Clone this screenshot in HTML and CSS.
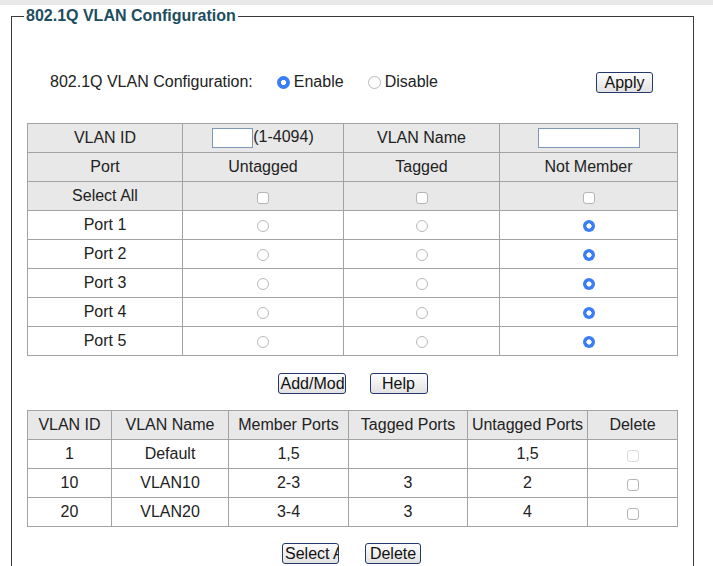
FILE: index.html
```html
<!DOCTYPE html>
<html>
<head>
<meta charset="utf-8">
<link rel="stylesheet" href="styles.css">
</head>
<body>
<div class="topbar"></div>
<fieldset class="panel">
  <legend class="panel-title">802.1Q VLAN Configuration</legend>
  <div class="cfg-row">
    <span class="cfg-label">802.1Q VLAN Configuration:</span>
    <label class="opt opt-first"><input type="radio" name="en" class="radio" checked>Enable</label>
    <label class="opt"><input type="radio" name="en" class="radio">Disable</label>
    <button class="btn btn-apply">Apply</button>
  </div>

  <table class="grid port-table">
    <colgroup><col class="c155"><col class="c161"><col class="c156"><col class="c178"></colgroup>
    <tr class="head">
      <td>VLAN ID</td>
      <td><input class="txt txt-id" type="text">(1-4094)</td>
      <td>VLAN Name</td>
      <td><input class="txt txt-name" type="text"></td>
    </tr>
    <tr class="head"><td>Port</td><td>Untagged</td><td>Tagged</td><td>Not Member</td></tr>
    <tr class="head">
      <td>Select All</td>
      <td><input type="checkbox" class="chk"></td>
      <td><input type="checkbox" class="chk"></td>
      <td><input type="checkbox" class="chk"></td>
    </tr>
    <tr><td>Port 1</td><td><input type="radio" name="p1" class="radio radio-sm"></td><td><input type="radio" name="p1" class="radio radio-sm"></td><td><input type="radio" name="p1" class="radio radio-sm" checked></td></tr>
    <tr><td>Port 2</td><td><input type="radio" name="p2" class="radio radio-sm"></td><td><input type="radio" name="p2" class="radio radio-sm"></td><td><input type="radio" name="p2" class="radio radio-sm" checked></td></tr>
    <tr><td>Port 3</td><td><input type="radio" name="p3" class="radio radio-sm"></td><td><input type="radio" name="p3" class="radio radio-sm"></td><td><input type="radio" name="p3" class="radio radio-sm" checked></td></tr>
    <tr><td>Port 4</td><td><input type="radio" name="p4" class="radio radio-sm"></td><td><input type="radio" name="p4" class="radio radio-sm"></td><td><input type="radio" name="p4" class="radio radio-sm" checked></td></tr>
    <tr><td>Port 5</td><td><input type="radio" name="p5" class="radio radio-sm"></td><td><input type="radio" name="p5" class="radio radio-sm"></td><td><input type="radio" name="p5" class="radio radio-sm" checked></td></tr>
  </table>

  <div class="btn-row">
    <button class="btn btn-addmod">Add/Mod</button>
    <button class="btn btn-help">Help</button>
  </div>

  <table class="grid vlan-table">
    <colgroup><col class="c84"><col class="c117"><col class="c120"><col class="c119"><col class="c120"><col class="c90"></colgroup>
    <tr class="head"><td>VLAN ID</td><td>VLAN Name</td><td>Member Ports</td><td>Tagged Ports</td><td>Untagged Ports</td><td>Delete</td></tr>
    <tr><td>1</td><td>Default</td><td>1,5</td><td></td><td>1,5</td><td><input type="checkbox" class="chk" disabled></td></tr>
    <tr><td>10</td><td>VLAN10</td><td>2-3</td><td>3</td><td>2</td><td><input type="checkbox" class="chk"></td></tr>
    <tr><td>20</td><td>VLAN20</td><td>3-4</td><td>3</td><td>4</td><td><input type="checkbox" class="chk"></td></tr>
  </table>

  <div class="btn-row btn-row-bottom">
    <button class="btn btn-selall">Select All</button>
    <button class="btn btn-delete">Delete</button>
  </div>
</fieldset>
</body>
</html>
```

FILE: styles.css
```css
html, body {
  margin: 0;
  padding: 0;
  background: #fff;
}
body {
  font-family: "Liberation Sans", Arial, sans-serif;
  font-size: 16px;
  color: #222;
}
.topbar {
  height: 5px;
  background: #e8e8e8;
}
.panel {
  margin: 2px 0 0 11px;
  width: 683px;
  box-sizing: border-box;
  border: 1px solid #3a3a3a;
  padding: 0 12px 14px;
  min-width: 0;
}
.panel-title {
  padding: 0 2px;
  font-weight: bold;
  font-size: 16px;
  line-height: 18px;
  color: #204e5e;
}
.cfg-row {
  display: flex;
  align-items: center;
  height: 30px;
  margin-top: 42px;
  padding-left: 26px;
}
.cfg-label {
  white-space: nowrap;
}
.opt {
  display: flex;
  align-items: center;
  margin-left: 24px;
}
.radio {
  appearance: none;
  -webkit-appearance: none;
  box-sizing: border-box;
  width: 13px;
  height: 13px;
  margin: 0 4px 0 0;
  border-radius: 50%;
  border: 1px solid #b9b9b9;
  background: #fff;
  vertical-align: middle;
}
.radio:checked {
  border: none;
  background: radial-gradient(circle, #fff 0, #fff 2.3px, #3a7df5 2.9px);
}
.radio-sm {
  width: 12px;
  height: 12px;
  margin: 0;
}
.chk {
  appearance: none;
  -webkit-appearance: none;
  box-sizing: border-box;
  width: 12px;
  height: 12px;
  margin: 2px 0 0;
  border: 1px solid #b5b5b5;
  border-radius: 3px;
  background: #fff;
  vertical-align: middle;
}
.chk:disabled {
  border-color: #d9d9d9;
}
.btn {
  font-family: "Liberation Sans", Arial, sans-serif;
  font-size: 16px;
  color: #111;
  height: 21px;
  line-height: 19px;
  padding: 0 2px;
  margin: 0;
  border: 1px solid #22396a;
  border-radius: 3px;
  background: linear-gradient(#fdfdfd, #e2e2e2);
  overflow: hidden;
  white-space: nowrap;
  box-sizing: border-box;
}
.btn-apply {
  width: 57px;
  margin-left: auto;
  margin-right: 28px;
}
.btn-addmod { width: 68px; }
.btn-help { width: 58px; }
.btn-selall {
  width: 57px;
  text-align: left;
  padding-left: 2px;
}
.btn-delete { width: 56px; }

.grid {
  border-collapse: collapse;
  table-layout: fixed;
  width: 650px;
  margin: 0 0 0 3px;
}
.grid td {
  border: 1px solid #a3a3a3;
  padding: 0;
  height: 28px;
  text-align: center;
  vertical-align: middle;
  white-space: nowrap;
}
.grid .head td {
  background: #e8e8e8;
}
.port-table {
  margin-top: 26px;
}
.vlan-table {
  margin-top: 16px;
}
.txt {
  box-sizing: border-box;
  height: 20px;
  margin: 0;
  padding: 0 2px;
  border: 1px solid #7f97b6;
  background: #fff;
  vertical-align: middle;
  font-family: "Liberation Sans", Arial, sans-serif;
  font-size: 13px;
}
.txt-id { width: 41px; }
.txt-name { width: 102px; }

.btn-row {
  display: flex;
  justify-content: center;
  gap: 24px;
  margin-top: 17px;
}
.btn-row-bottom {
  gap: 26px;
  margin-top: 16px;
  padding-right: 2px;
}

.c155 { width: 155px; }
.c161 { width: 161px; }
.c156 { width: 156px; }
.c178 { width: 178px; }
.c84 { width: 84px; }
.c117 { width: 117px; }
.c120 { width: 120px; }
.c119 { width: 119px; }
.c90 { width: 90px; }
```
